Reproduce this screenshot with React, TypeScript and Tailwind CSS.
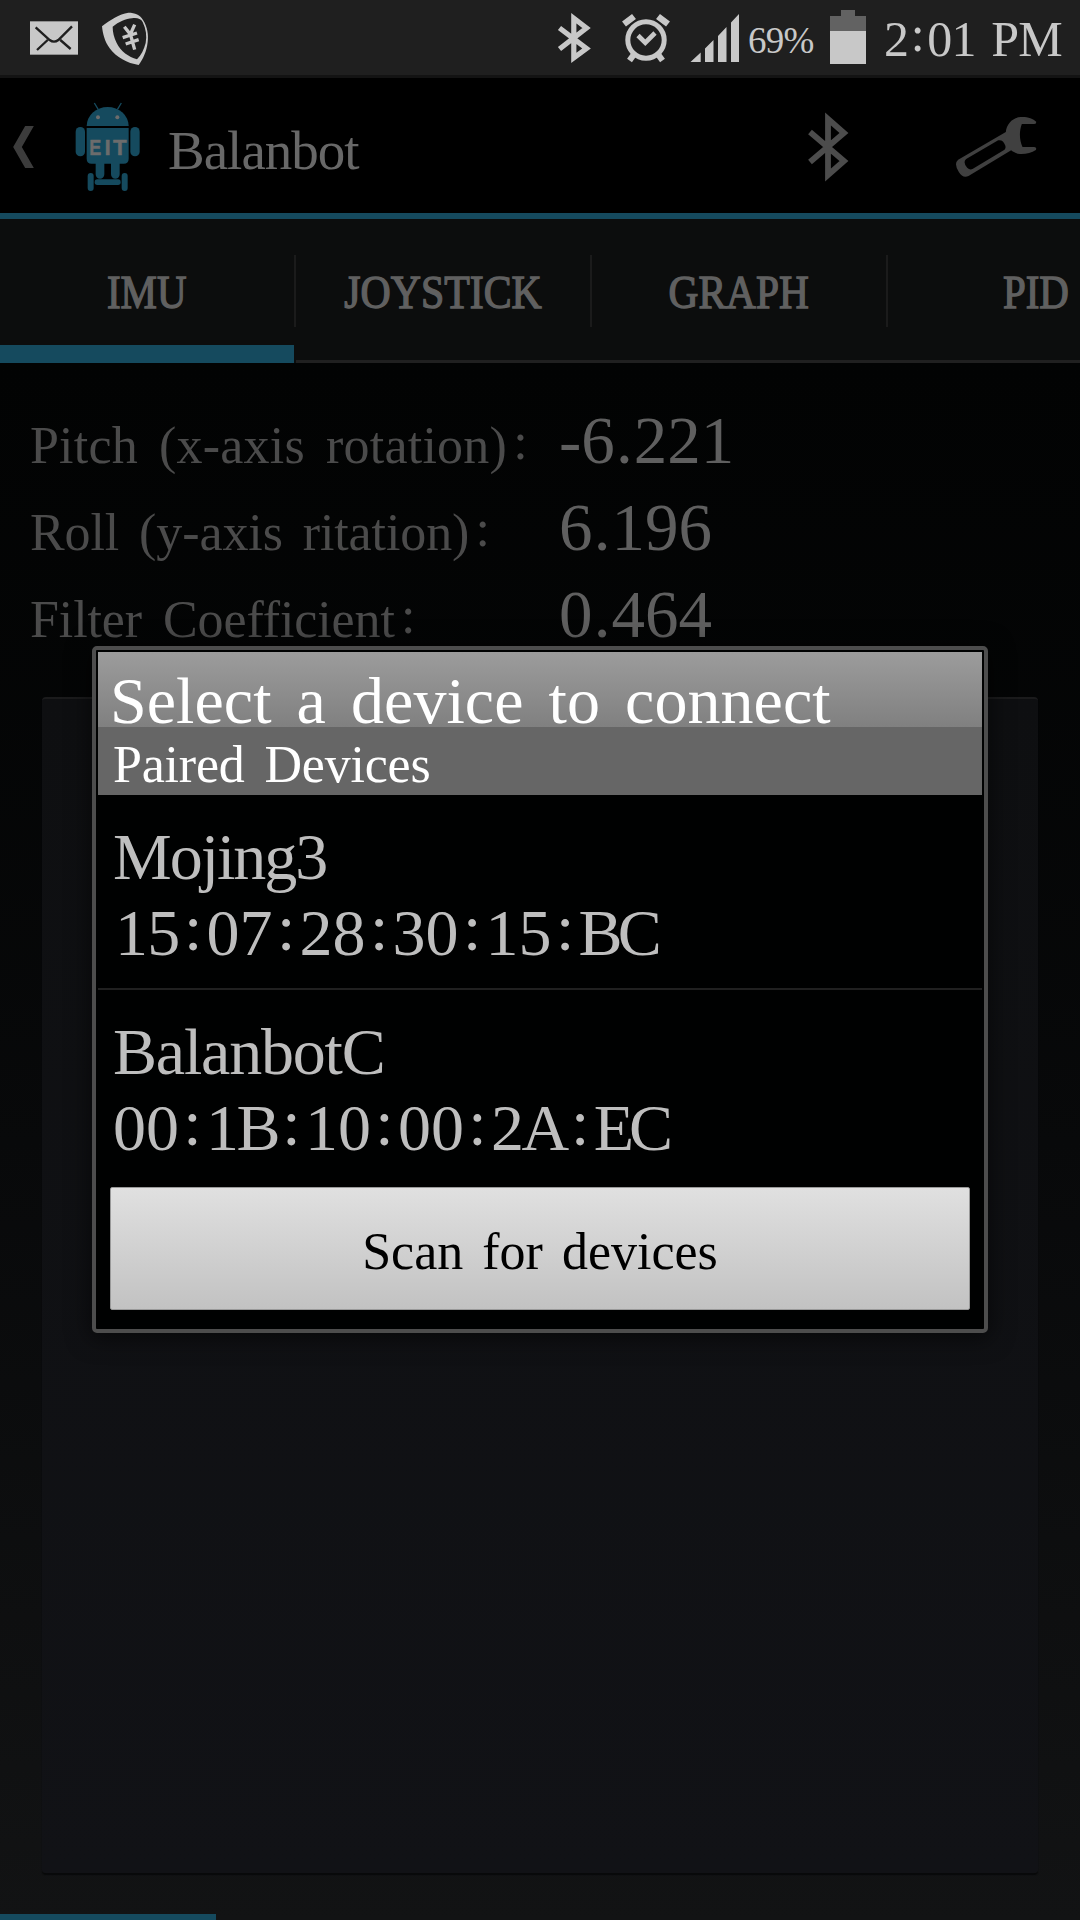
function BluetoothSmall() {
  return (
    <svg className="ml-[406px] h-[54px] w-[36px] shrink-0" viewBox="556 11 36 54" fill="none" stroke="#c8c8c8" strokeWidth="5.2" strokeMiterlimit="10">
      <path d="M559.5 28 L586.5 48.5 L573.8 57.8 V18.2 L586.5 28 L559.5 49" />
    </svg>
  );
}

function Alarm() {
  return (
    <svg className="ml-[29px] h-[54px] w-[50px] shrink-0" viewBox="621 11 50 54" fill="none" stroke="#c8c8c8">
      <circle cx="646" cy="40" r="18.2" strokeWidth="5" />
      <path d="M638 35.5 L645.3 42.7 L655 33" strokeWidth="4.6" />
      <path d="M624 24 L634 16.5 M668 24 L658 16.5" strokeWidth="6.5" />
      <path d="M633.500 55 L629.500 60.5 M658.500 55 L662.500 60.5" strokeWidth="6" />
    </svg>
  );
}

function Signal() {
  return (
    <svg className="ml-[19px] h-[54px] w-[50px] shrink-0" viewBox="690 11 50 54" fill="#c8c8c8">
      <path d="M690.5 62 L700.7 52.500 V62Z M705 62 V48.500 L713.500 40 V62Z M718 62 V36 L726.500 27 V62Z M731 62 V22.500 L739 14 V62Z" />
    </svg>
  );
}

function Battery() {
  return (
    <svg className="-mt-[1px] ml-[16px] h-[54px] w-[36px] shrink-0" viewBox="830 10 36 54">
      <path d="M830 16 H841 V10 H855 V16 H866 V31 H830Z" fill="#626262" />
      <path d="M830 31 H866 V64 H830Z" fill="#c8c8c8" />
    </svg>
  );
}

function StatusBar() {
  return (
    <div className="flex h-[78px] items-start border-b-[3px] border-[#131313] bg-[#1f1f1f] text-[#c8c8c8]">
      <svg className="mt-[21px] ml-[30px] h-[34px] w-[48px] shrink-0" viewBox="90 63 144 102" fill="none" stroke="#1f1f1f" strokeWidth="7">
        <rect x="90" y="64" width="144" height="100" fill="#c8c8c8" stroke="none" />
        <path d="M107 82 L149 120 Q162 130 175 120 L216 79 M111 150 L143 120 M181 120 L212 147" />
      </svg>
      <svg className="mt-[10px] ml-[22px] h-[57px] w-[50px] shrink-0" viewBox="300 30 150 171">
        <path fill="#c8c8c8" fillRule="evenodd" d="M306 79 C330 60 358 42 385 38 C405 38 421 45 429 60 C442 80 446 105 443 126 C440 154 429 178 416 195 C382 190 349 172 329 145 C314 124 308 101 306 79Z M338 80 C356 66 378 56 396 55 C410 53 422 55 428 66 C438 86 441 109 437 129 C432 149 423 166 411 178 C386 171 362 154 350 129 C342 112 338 97 338 80Z" />
        <path fill="none" stroke="#c8c8c8" strokeWidth="10" d="M373 80 L391 103 L404 74 M391 102 L404 149 M368 113 L411 99 M377 132 L416 119" />
      </svg>
      <div className="flex h-full items-start pt-[11px]">
        <BluetoothSmall />
        <Alarm />
        <Signal />
        <span className="-mt-[1px] ml-[8px] w-[66px] text-[37px] leading-[61px] tracking-[-0.8px]">69%</span>
        <Battery />
        <span className="-mt-[3px] ml-[18px] whitespace-nowrap text-[50px] leading-[62px] tracking-[-0.800px] [word-spacing:4px]">
          2<Colon className="w-[19px] -translate-y-[5px]" />01 PM
        </span>
      </div>
    </div>
  );
}

function Colon({ className }: { className: string }) {
  return <span className={`inline-block text-center tracking-normal ${className}`}>:</span>;
}

function RobotLogo() {
  return (
    <svg className="ml-[39px] h-[93px] w-[70px] shrink-0" viewBox="220 300 210 279" fill="#154a5e">
      <path d="M284 309 L296 329 M365 309 L353 329" stroke="#154a5e" strokeWidth="4" />
      <path d="M261 378 A63 57 0 0 1 387 378Z" />
      <path d="M261 384 H387 V476 Q387 491 372 491 H360 V523 A13 13 0 0 1 334 523 V491 H314 V523 A13 13 0 0 1 288 523 V491 H276 Q261 491 261 476Z" />
      <rect x="228" y="381" width="28" height="88" rx="14" />
      <rect x="392" y="381" width="28" height="88" rx="14" />
      <rect x="264" y="519" width="18" height="54" rx="9" />
      <rect x="366" y="519" width="18" height="54" rx="9" />
      <rect x="285" y="538" width="78" height="17" rx="8" />
      <circle cx="295" cy="352" r="6" fill="#6c6c6c" />
      <circle cx="353" cy="352" r="6" fill="#6c6c6c" />
      <g fontSize="67" fontWeight="700" fontFamily="Liberation Sans, sans-serif" fill="#6c6c6c" stroke="#6c6c6c" strokeWidth="1.5">
        <text x="269" y="465" textLength="36" lengthAdjust="spacingAndGlyphs">E</text>
        <text x="314.500" y="465">I</text>
        <text x="340" y="465" textLength="41" lengthAdjust="spacingAndGlyphs">T</text>
      </g>
    </svg>
  );
}

function ActionBar() {
  return (
    <div className="flex h-[141px] items-start border-b-[6px] border-[#154a5e] bg-black pt-[22px]">
      <svg className="mt-[26px] ml-[13px] h-[42px] w-[21px] shrink-0" viewBox="39 378 62 126" fill="#3c3c3c">
        <path d="M75 378 H101 L65 441 L101 504 H75 L39 441Z" />
      </svg>
      <RobotLogo />
      <span className="mt-[19px] ml-[25px] w-[200px] text-[55px] leading-[64px] tracking-[-1px] text-[#686868]">Balanbot</span>
      <svg className="mt-[11px] ml-[439px] h-[72px] w-[42px] shrink-0" viewBox="807 111 42 72" fill="none" stroke="#4c4c4c" strokeWidth="5.8" strokeMiterlimit="10">
        <path d="M810 132 L844 161 L828 175 V119 L844 133 L810 162" />
      </svg>
      <svg className="mt-[15px] ml-[104px] h-[65px] w-[87px] shrink-0" viewBox="520 75 260 195" fill="#404040">
        <path fillRule="evenodd" d="M678 126 C680 101 699 82 723 81 C742 80 760 85 769 95 Q770 102 762 102 H726 C718 123 718 149 728 171 H763 Q772 172 768 180 C755 188 738 193 720 192 C708 191 699 185 694 181 L566 258 Q549 266 537 246 Q521 221 535 209Z M559 207 L655 151 Q670 148 676 166 Q679 175 674 179 L578 237 Q570 241 562 233 Q548 217 559 207Z" />
      </svg>
    </div>
  );
}

function Tab({ label, className, active, last }: { label: string; className: string; active?: boolean; last?: boolean }) {
  return (
    <div className={`flex h-[144px] w-[296px] shrink-0 flex-col items-center ${active ? '' : 'border-b-[3px] border-[#202020]'}`}>
      <div className={`mt-[36px] flex h-[72px] w-full justify-center ${last ? '' : 'border-r-2 border-[#1b1b1b]'}`}>
        <span className={`inline-block whitespace-nowrap text-[47px] leading-[74px] text-[#606060] [-webkit-text-stroke:1.4px_#606060] ${className}`}>{label}</span>
      </div>
      {active && <div className="mt-[18px] h-[18px] w-[294px] self-start bg-[#154a5e]" />}
    </div>
  );
}

function Reading({ label, labelClass, value }: { label: string; labelClass: string; value: string }) {
  const [whole, fraction] = value.split('.');
  return (
    <div className="flex h-[87px] items-start pl-[30px]">
      <span className={`w-[529px] whitespace-nowrap text-[52px] leading-[89px] text-[#4b4b4b] ${labelClass}`}>
        {label}
        <Colon className="w-[27px] -translate-y-[4px]" />
      </span>
      <span className="whitespace-nowrap text-[67px] leading-[78px] text-[#5f5f5f]">
        {whole}
        <span className="inline-block w-[19px] text-center">.</span>
        {fraction}
      </span>
    </div>
  );
}

function Device({ name, nameClass, address, firstPartClass, lastPartClass }: { name: string; nameClass: string; address: string; firstPartClass: string; lastPartClass: string }) {
  const parts = address.split(':');
  return (
    <div className="pt-[24px] pl-[15px] text-[66px] leading-[76px] whitespace-nowrap text-[#bebebe]">
      <div className={nameClass}>{name}</div>
      <div>
        {parts.map((part, i) => {
          const last = i === parts.length - 1;
          const spacing = i === 0 ? firstPartClass : last ? lastPartClass : /[A-F]/.test(part) ? 'tracking-[-2.500px]' : '';
          return (
            <span key={i} className={spacing}>
              {part}
              {!last && <Colon className="w-[27px] -translate-y-[5px]" />}
            </span>
          );
        })}
      </div>
    </div>
  );
}

function DeviceDialog() {
  return (
    <div className="absolute top-[646px] left-[92px] h-[687px] w-[896px] rounded-[5px] border-4 border-[#4d4d4d] bg-[#000101] p-[2px] shadow-[0_3px_22px_3px_rgba(0,0,0,0.5)]">
      <div className="h-[75px] bg-linear-to-b from-[#9c9c9c] to-[#808080] pt-[11px] pl-[12px]">
        <h1 className="text-[66px] leading-[75px] tracking-[0.050px] whitespace-nowrap text-white [word-spacing:8.500px]">Select a device to connect</h1>
      </div>
      <div className="h-[68px] bg-[#666] pl-[15px]">
        <h2 className="text-[52px] leading-[75px] tracking-[-0.2px] whitespace-nowrap text-white [word-spacing:7px]">Paired Devices</h2>
      </div>
      <div className="h-[195px] border-b-2 border-[#202020]">
        <Device name="Mojing3" nameClass="tracking-[-2px]" address="15:07:28:30:15:BC" firstPartClass="ml-[2px] tracking-[-0.700px]" lastPartClass="tracking-[-5px]" />
      </div>
      <div className="h-[197px]">
        <Device name="BalanbotC" nameClass="tracking-[-1.200px]" address="00:1B:10:00:2A:EC" firstPartClass="" lastPartClass="tracking-[-5px]" />
      </div>
      <button className="ml-[12px] block h-[123px] w-[860px] rounded-[2px] border border-[#999] bg-linear-to-b from-[#e0e0e0] to-[#c2c2c2] text-[52px] leading-[128px] whitespace-nowrap text-black [word-spacing:6px]">
        Scan for devices
      </button>
    </div>
  );
}

export default function App() {
  return (
    <div className="relative flex h-[1920px] w-[1080px] flex-col overflow-hidden bg-black font-['Liberation_Serif',serif]">
      <StatusBar />
      <ActionBar />
      <div className="flex overflow-hidden bg-[#0c0d0d]">
        <Tab label="IMU" className="scale-x-[0.87]" active />
        <Tab label="JOYSTICK" className="scale-x-[0.89]" />
        <Tab label="GRAPH" className="scale-x-[0.88]" />
        <Tab label="PID" className="scale-x-[0.87]" last />
      </div>
      <div className="flex flex-1 flex-col bg-linear-to-b from-[#020303] via-[#08090a] to-[#121314] pt-[38px]">
        <Reading label="Pitch (x-axis rotation)" labelClass="tracking-[0.200px] [word-spacing:8px]" value="-6.221" />
        <Reading label="Roll (y-axis ritation)" labelClass="tracking-[-0.100px] [word-spacing:7px]" value="6.196" />
        <Reading label="Filter Coefficient" labelClass="tracking-[-0.100px] [word-spacing:8px]" value="0.464" />
        <div className="mx-[42px] mt-[35px] h-[1176px] rounded-[4px] border-t-2 border-[#1b1b1c] bg-linear-to-b from-[#0e0f11] to-[#111216] shadow-[0_2px_1px_#08090a]" />
        <div className="mt-auto h-[6px] w-[216px] bg-[#154a5e]" />
      </div>
      <DeviceDialog />
    </div>
  );
}
